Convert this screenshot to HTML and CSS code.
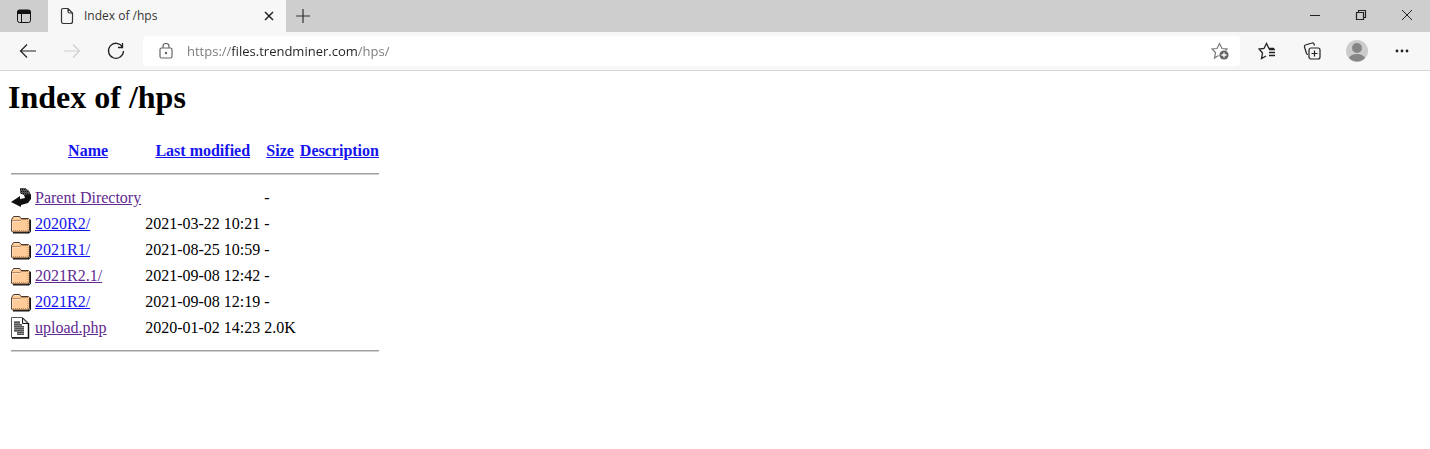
FILE: index.html
```html
<!DOCTYPE html>
<html lang="en">
<head>
    <meta charset="UTF-8">
    <meta name="viewport" content="width=device-width, initial-scale=1.0">
    <title>Index of /hps</title>
    <link rel="stylesheet" href="styles.css">
</head>
<body>
    <!-- shared directory listing icons -->
    <svg class="sprite" aria-hidden="true">
        <symbol id="folder" viewBox="0 0 20 22">
            <path d="M2 20.500h16l2-2V7l-1.500-1v13H2z" fill="#111"/>
            <path d="M.600 18V6.500l1-1.500 1-1.500h6L10 5.500h7.500l1 1V17l-1.500 2H1.500z" fill="#ffcc99" stroke="#4a382a"/>
            <path d="M1 7.500h8l1.500-1H17" fill="none" stroke="#b98a60"/>
            <path d="M3 4.500h5M1.500 8.500h8M1.500 8.500v9" fill="none" stroke="#ffdfbf"/>
            <path d="M2 17.500h14.500M17 8v9" fill="none" stroke="#c08a5a" stroke-dasharray="1 1"/>
        </symbol>
        <symbol id="file" viewBox="0 0 20 22">
            <path d="M.500.500h11l6 5.500v14.500H.500z" fill="#fff" stroke="#555"/>
            <path d="M11.500 1v5.500h5.500z" fill="#eee" stroke="#111"/>
            <path d="M17.500 6v15H1" fill="none" stroke="#111" stroke-width="1.500"/>
            <path d="M3 4h6v3h2v2h2v9H6v-3H3z" fill="#888"/>
            <path d="M3 5.500h6M3 7.500h8M3 9.500h10M4 11.500h9M3 13.500h10M6 15.500h7M6 17.500h7" stroke="#555"/>
        </symbol>
    </svg>

    <header class="browser">
        <div class="tab-bar">
            <button class="tab-actions" aria-label="Tab actions">
                <svg width="16" height="16" viewBox="0 0 16 16" fill="none" stroke="#111"><rect x="1.500" y="2" width="13" height="12.500" rx="2"/><path d="M2 2.500h12v3H2z" fill="#111"/><path d="M5.500 6v8"/></svg>
            </button>
            <div class="tab">
                <svg width="14" height="18" viewBox="0 0 14 18" fill="none" stroke="#333" stroke-width="1.200"><path d="M3 1.500h5l4.500 4.500v8.500a2 2 0 0 1-2 2H3a2 2 0 0 1-1.500-2V3A1.500 1.500 0 0 1 3 1.500zM8 1.500v3A1.500 1.500 0 0 0 9.500 6h3"/></svg>
                <span class="tab-title">Index of /hps</span>
                <button class="tab-close" aria-label="Close tab">
                    <svg width="10" height="10" viewBox="0 0 10 10" stroke="#222" stroke-width="1.500"><path d="M1 1l8 8M9 1L1 9"/></svg>
                </button>
            </div>
            <button class="new-tab" aria-label="New tab">
                <svg width="14" height="14" viewBox="0 0 14 14" stroke="#333" stroke-width="1.200"><path d="M7 0v14M0 7h14"/></svg>
            </button>
            <div class="window-buttons">
                <button aria-label="Minimize"><svg width="12" height="12" viewBox="0 0 12 12" stroke="#222"><path d="M1 6.500h10"/></svg></button>
                <button aria-label="Restore"><svg width="12" height="12" viewBox="0 0 12 12" fill="none" stroke="#222" stroke-width="1.200"><path d="M1.500 3.500h7v7h-7zM3.500 3.500v-2h7v7h-2"/></svg></button>
                <button aria-label="Close"><svg width="12" height="12" viewBox="0 0 12 12" stroke="#222"><path d="M1 1l10 10M11 1L1 11"/></svg></button>
            </div>
        </div>
        <div class="toolbar">
            <div class="nav-buttons">
                <button aria-label="Back"><svg width="18" height="16" viewBox="0 0 18 16" fill="none" stroke="#222" stroke-width="1.200"><path d="M17 8H1.500M8 1.500L1.500 8 8 14.500"/></svg></button>
                <button aria-label="Forward" disabled><svg width="18" height="16" viewBox="0 0 18 16" fill="none" stroke="#cfcfcf" stroke-width="1.200"><path d="M1 8h15.500M10 1.500L16.500 8 10 14.500"/></svg></button>
                <button aria-label="Refresh"><svg width="18" height="18" viewBox="0 0 18 18" fill="none" stroke="#222" stroke-width="1.300"><path d="M15.500 5A7.500 7.500 0 1 0 16.500 9M15.500 1v4.500H11"/></svg></button>
            </div>
            <div class="address">
                <svg width="14" height="16" viewBox="0 0 14 16" fill="none" stroke="#666" stroke-width="1.200"><rect x="1" y="5" width="12" height="10" rx="1.500"/><path d="M4 5V3.500a3 3 0 0 1 6 0V5"/><circle cx="7" cy="10" r=".6" fill="#666"/></svg>
                <input class="url" type="text" value="https://files.trendminer.com/hps/" aria-label="Address" spellcheck="false">
                <button aria-label="Add to favorites">
                    <svg width="18" height="18" viewBox="0 0 18 18" fill="none" stroke="#777" stroke-width="1.200"><path d="M7.500 13.500L3.500 16l1-5.500L1 7l5-.5 2.500-5L11 6.500l5 .5-1.500 1.500"/><circle cx="13" cy="13" r="4.600" fill="#666" stroke="none"/><path d="M13 10.500v5M10.500 13h5" stroke="#fff" stroke-width="1.300"/></svg>
                </button>
            </div>
            <div class="actions">
                <button aria-label="Favorites"><svg width="18" height="18" viewBox="0 0 18 18" fill="none" stroke="#222" stroke-width="1.300"><path d="M16 6.500h-5L8.500 1.500 6 6.500 1 7l3.500 4-1 5.500L8 14M11 7.500h6M11 10.500h6M11 13.500h6"/></svg></button>
                <button aria-label="Collections"><svg width="18" height="18" viewBox="0 0 18 18" fill="none" stroke="#222" stroke-width="1.200"><rect x="6" y="6" width="11" height="11" rx="2"/><path d="M11.500 8.500v6M8.500 11.500h6M11.500 3.500l-.5-1.500a1.500 1.500 0 0 0-2-1L2.500 3A1.500 1.500 0 0 0 1.500 5l2 6.500q.5 1 1.500 1"/></svg></button>
                <button aria-label="Profile"><svg width="22" height="22" viewBox="0 0 22 22"><circle cx="11" cy="11" r="11" fill="#ccc"/><circle cx="11" cy="8" r="5" fill="#858585"/><path d="M3 18q2-4 8-4t8 4a11 11 0 0 1-16 0z" fill="#858585"/></svg></button>
                <button aria-label="Settings and more"><svg width="14" height="4" viewBox="0 0 14 4" fill="#222"><circle cx="2" cy="2" r="1.400"/><circle cx="7" cy="2" r="1.400"/><circle cx="12" cy="2" r="1.400"/></svg></button>
            </div>
        </div>
    </header>

    <main>
        <h1>Index of /hps</h1>
        <table>
            <tr class="head">
                <td></td>
                <th><a href="#name">Name</a></th>
                <th><a href="#modified">Last modified</a></th>
                <th><a href="#size">Size</a></th>
                <th><a href="#description">Description</a></th>
            </tr>
            <tr><td colspan="5"><hr></td></tr>
            <tr>
                <td><svg class="icon" viewBox="0 0 20 22"><path d="M9 1h5l4 3 2 4v4l-3 4-7 2v2L0 15l9-6v3l5-1-1-3-4-2z" fill="#111"/><path d="M9 1h5l4 3 1 3-6 1-4-2z" fill="#555"/><path d="M9 2.500h6M10 4.500h7M10 6.500h8" stroke="#111" stroke-dasharray="1 1"/></svg></td>
                <td><a class="visited" href="#parent">Parent Directory</a></td>
                <td></td>
                <td>-</td>
                <td></td>
            </tr>
            <tr>
                <td><svg class="icon"><use href="#folder"/></svg></td>
                <td><a href="#2020R2">2020R2/</a></td>
                <td>2021-03-22 10:21</td>
                <td>-</td>
                <td></td>
            </tr>
            <tr>
                <td><svg class="icon"><use href="#folder"/></svg></td>
                <td><a href="#2021R1">2021R1/</a></td>
                <td>2021-08-25 10:59</td>
                <td>-</td>
                <td></td>
            </tr>
            <tr>
                <td><svg class="icon"><use href="#folder"/></svg></td>
                <td><a class="visited" href="#2021R2.1">2021R2.1/</a></td>
                <td>2021-09-08 12:42</td>
                <td>-</td>
                <td></td>
            </tr>
            <tr>
                <td><svg class="icon"><use href="#folder"/></svg></td>
                <td><a href="#2021R2">2021R2/</a></td>
                <td>2021-09-08 12:19</td>
                <td>-</td>
                <td></td>
            </tr>
            <tr>
                <td><svg class="icon"><use href="#file"/></svg></td>
                <td><a class="visited" href="#upload">upload.php</a></td>
                <td>2020-01-02 14:23</td>
                <td>2.0K</td>
                <td></td>
            </tr>
            <tr><td colspan="5"><hr></td></tr>
        </table>
    </main>
</body>
</html>
```
FILE: styles.css
```css
* {
    box-sizing: border-box;
}

body {
    margin: 0;
    background: #fff;
    color: #000;
    font-family: "Liberation Serif", serif;
    font-size: 16px;
}

button {
    display: flex;
    align-items: center;
    justify-content: center;
    padding: 0;
    border: none;
    background: none;
}

svg {
    display: block;
}

.sprite {
    display: none;
}

/* browser bars */
.browser {
    background: #f7f7f7;
    border-bottom: 1px solid #d5d5d5;
    font-family: "Open Sans", sans-serif;
}

.tab-bar {
    display: flex;
    height: 32px;
    background: #cecece;
}

.tab-actions {
    width: 48px;
}

.tab {
    display: flex;
    align-items: center;
    width: 238px;
    padding: 0 12px;
    background: #f7f7f7;
}

.tab-title {
    flex: 1;
    margin-left: 10px;
    color: #333;
    font-size: 12px;
    line-height: 16px;
}

.new-tab {
    width: 34px;
}

.window-buttons {
    display: flex;
    margin-left: auto;
}

.window-buttons button {
    width: 46px;
    height: 30px;
}

.toolbar {
    display: flex;
    align-items: center;
    height: 38px;
}

.nav-buttons {
    display: flex;
    padding: 0 5px 0 6px;
}

.nav-buttons button {
    width: 44px;
    height: 30px;
}

.address {
    display: flex;
    flex: 1;
    align-items: center;
    height: 30px;
    padding: 0 11px 0 16px;
    background: #fff;
    border-radius: 4px;
}

/* the host name is darker than the rest of the address */
.url {
    flex: 1;
    min-width: 0;
    margin-left: 14px;
    padding: 0;
    border: none;
    outline: none;
    background: linear-gradient(90deg, #777 45px, #222 45px, #222 170px, #777 170px);
    -webkit-background-clip: text;
    background-clip: text;
    color: transparent;
    font-family: "Open Sans", sans-serif;
    font-size: 13px;
    line-height: 18px;
}

.actions {
    display: flex;
    padding: 0 6px 0 4px;
}

.actions button {
    width: 45px;
    height: 30px;
}

/* directory listing */
main {
    padding: 8px;
}

h1 {
    margin: 0 0 21px;
    font-size: 32px;
    line-height: 37px;
}

table {
    border-spacing: 2px;
}

td, th {
    padding: 1px;
}

.head {
    height: 24px;
}

td:nth-child(3) {
    text-align: right;
}

a {
    color: #1414ee;
}

.visited {
    color: #5f2a91;
}

.icon {
    width: 20px;
    height: 22px;
}

hr {
    height: 2px;
    margin: 7px 0 8px;
    border: none;
    border-top: 1px solid #a0a0a0;
    border-bottom: 1px solid #d0d0d0;
}
```
